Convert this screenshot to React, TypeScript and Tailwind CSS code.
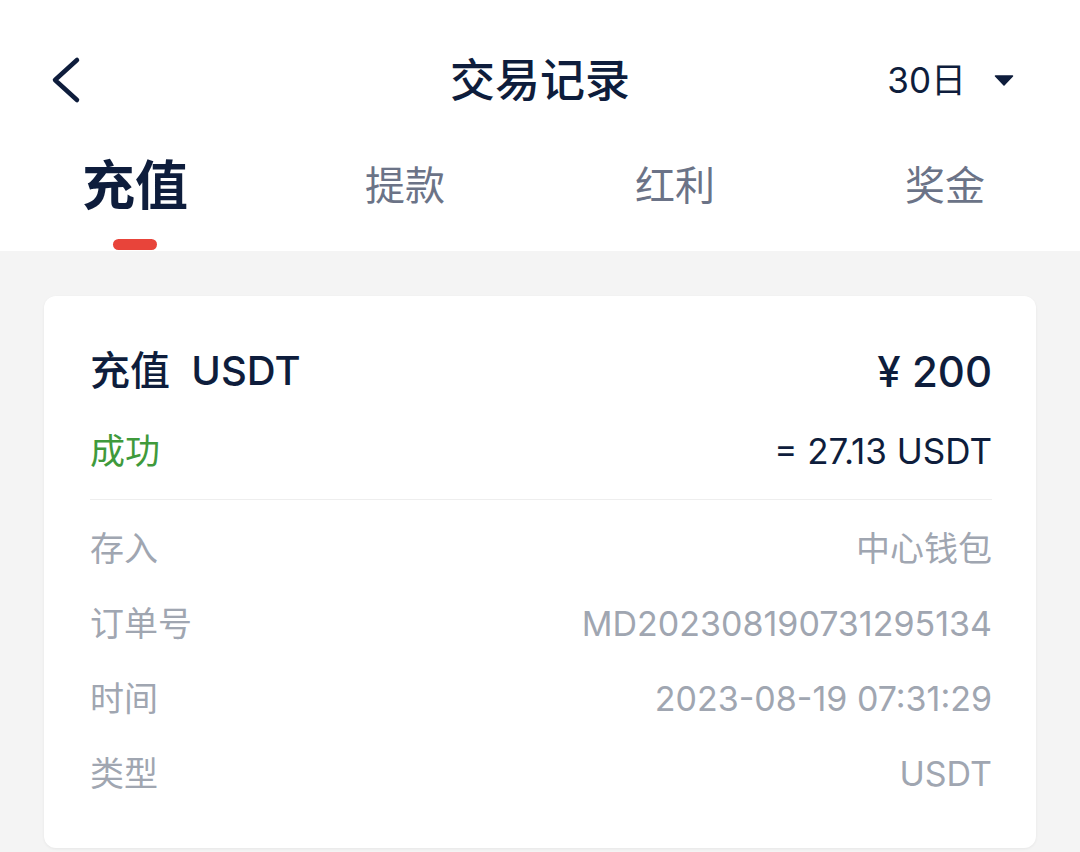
import React from 'react';

const font = { fontFamily: 'Inter, "Noto Sans CJK SC", sans-serif' };

export default function App() {
  const tabs = ['充值', '提款', '红利', '奖金'];
  const details = [
    { label: '存入', value: '中心钱包' },
    { label: '订单号', value: 'MD20230819073129513' + '4' },
    { label: '时间', value: '2023-08-19 07:31:29' },
    { label: '类型', value: 'USDT' }
  ];

  return (
    <div className="min-h-[852px] w-[1080px] bg-[#f4f4f4]" style={font}>
      {/* Header */}
      <div className="bg-white">
        <div className="grid h-[160px] grid-cols-[1fr_auto_1fr] items-center">
          <div className="pl-[50px]">
            <svg width="36" height="50" viewBox="0 0 36 50" className="block">
              <path d="M27 5 L5 25 L27 45" fill="none" stroke="#0e1d3c" strokeWidth="4.5" strokeLinecap="round" strokeLinejoin="round" />
            </svg>
          </div>
          <div className="text-[45px] font-medium leading-none text-[#0e1d3c]">交易记录</div>
          <div className="flex items-center justify-end pr-[66px]">
            <span className="text-[35px] leading-none text-[#0e1d3c]">30日</span>
            <svg width="20" height="11" viewBox="0 0 20 11" className="ml-[28px] block">
              <path d="M1.5 1 L18.5 1 L10 10 Z" fill="#0e1d3c" stroke="#0e1d3c" strokeWidth="1.5" strokeLinejoin="round" />
            </svg>
          </div>
        </div>

        {/* Tabs */}
        <div className="grid grid-cols-4 pb-[1px]">
          {tabs.map((t, i) => (
            <div key={t} className="flex flex-col items-center">
              <span
                className={
                  i === 0
                    ? 'h-[52px] text-[53px] font-bold leading-[52px] text-[#0e1d3c]'
                    : 'h-[52px] text-[40px] leading-[52px] text-[#6b7387]'
                }
              >
                {t}
              </span>
              <div className={i === 0 ? 'mt-[27px] h-[11px] w-[44px] rounded-full bg-[#e8443a]' : 'mt-[27px] h-[11px] w-[44px]'} />
            </div>
          ))}
        </div>
      </div>

      {/* Card */}
      <div className="mx-[44px] mt-[45px] rounded-[12px] bg-white pb-[37px] pl-[46px] pr-[44px] pt-[50px] shadow-[0_1px_3px_rgba(0,0,0,0.06)]">
        <div className="flex h-[50px] items-center justify-between text-[#0e1d3c]">
          <span className="text-[40px] font-medium">充值&nbsp;&nbsp;USDT</span>
          <span className="text-[42px] font-medium">¥ 200</span>
        </div>
        <div className="mt-[30px] flex h-[50px] items-center justify-between">
          <span className="text-[35px] text-[#3f9a3c]">成功</span>
          <span className="text-[35px] text-[#0e1d3c]">= 27.13 USDT</span>
        </div>
        <div className="mt-[23px] h-px bg-[#eeeeee]" />
        <div className="mt-[11px]">
          {details.map((d) => (
            <div key={d.label} className="flex h-[75px] items-center justify-between text-[34px] text-[#a0a6b1]">
              <span>{d.label}</span>
              <span>{d.value}</span>
            </div>
          ))}
        </div>
      </div>
    </div>
  );
}
